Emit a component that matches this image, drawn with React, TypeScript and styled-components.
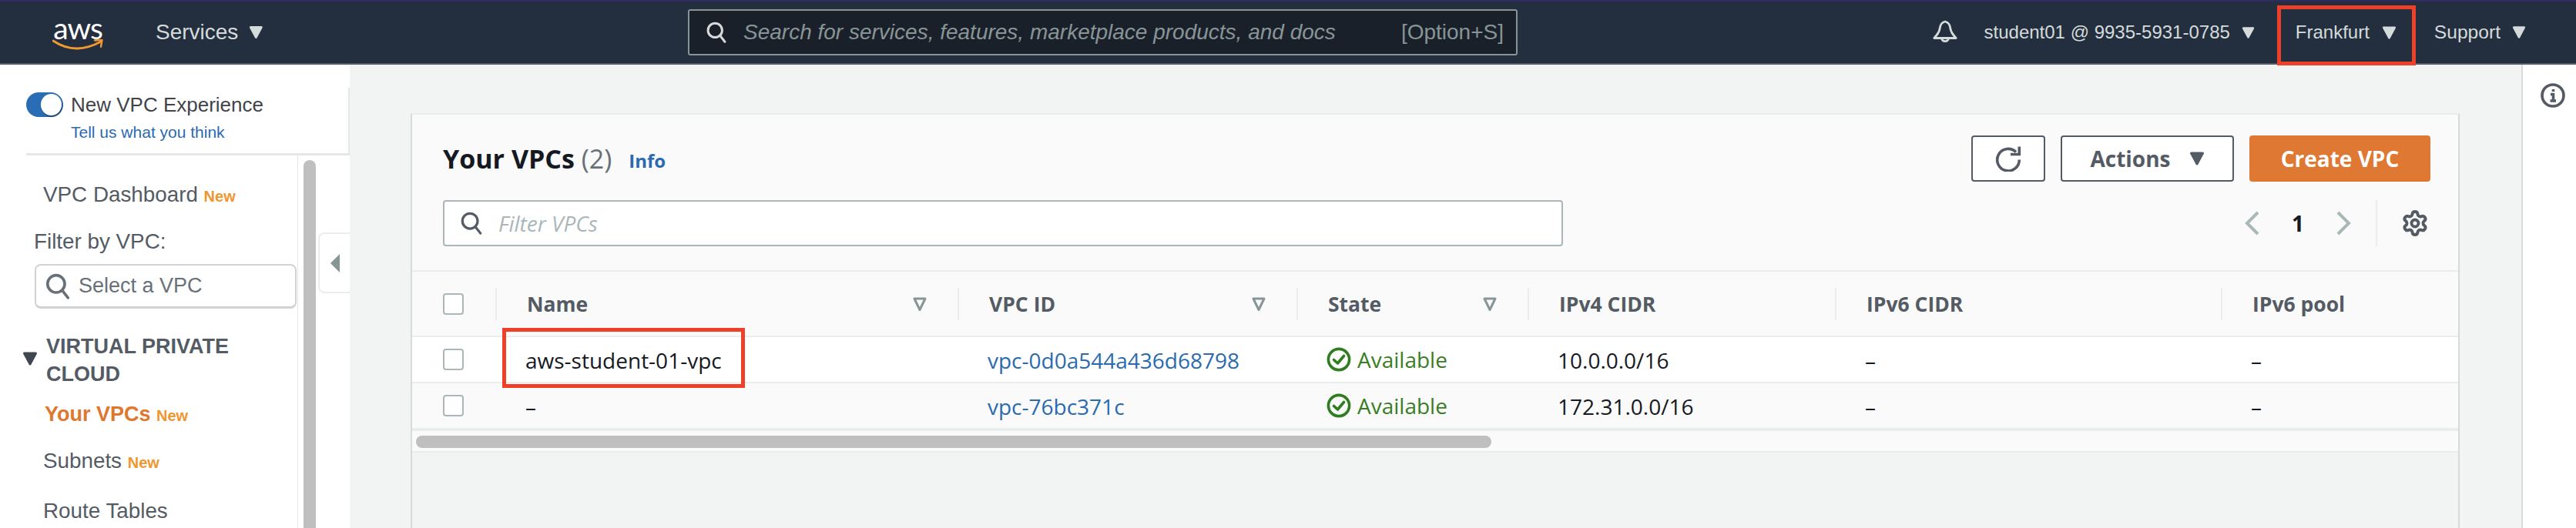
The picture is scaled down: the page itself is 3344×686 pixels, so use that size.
import { FC } from "react";
import styled, { createGlobalStyle } from "styled-components";
import { Settings } from "lucide-react";

type VpcRow = { name: string; id: string; cidr: string; highlighted?: boolean };

const rows: VpcRow[] = [
  { name: "aws-student-01-vpc", id: "vpc-0d0a544a436d68798", cidr: "10.0.0.0/16", highlighted: true },
  { name: "–", id: "vpc-76bc371c", cidr: "172.31.0.0/16" },
];

const SearchIcon: FC<{ size: number }> = ({ size }) => (
  <svg width={size} height={size} viewBox="0 0 32 32" fill="none" stroke="currentColor" strokeWidth="3.4">
    <circle cx="14" cy="13" r="10.5" />
    <path d="M21.5 21l7 9" strokeLinecap="round" />
  </svg>
);

const Caret: FC<{ size: number }> = ({ size }) => (
  <svg width={size} height={size} viewBox="0 0 20 20" fill="currentColor" stroke="currentColor" strokeWidth="3" strokeLinejoin="round">
    <path d="M2.5 3h15L10 17z" />
  </svg>
);

const FilterIcon = () => (
  <svg width="18" height="18" viewBox="0 0 18 18" fill="none" stroke="#879596" strokeWidth="3" strokeLinejoin="round">
    <path d="M2 2h14L9 16.5z" />
  </svg>
);

const CheckIcon = () => (
  <svg width="32" height="32" viewBox="0 0 32 32" fill="none" stroke="#2f7d1e" strokeWidth="3.6" strokeLinecap="round" strokeLinejoin="round">
    <circle cx="16" cy="16" r="13.6" />
    <path d="M9.5 16.5l5 4.5 8-9.5" />
  </svg>
);

const App: FC = () => (
  <Page>
    <GlobalStyle />
    <TopBar>
      <Logo>
        <LogoWord>aws</LogoWord>
        <svg width="66" height="16" viewBox="0 0 66 16" fill="none">
          <path d="M1 2c9 6 20 10 31 10 10 0 20-3 31-9" stroke="#f0992e" strokeWidth="3" strokeLinecap="round" />
          <path d="M55 1.5l9.5-.8-1.5 9" stroke="#f0992e" strokeWidth="2.4" strokeLinecap="round" strokeLinejoin="round" />
        </svg>
      </Logo>
      <ServicesMenu>
        Services
        <Caret size={20} />
      </ServicesMenu>
      <GlobalSearch>
        <SearchIcon size={28} />
        <GlobalSearchText>Search for services, features, marketplace products, and docs</GlobalSearchText>
        <Shortcut>[Option+S]</Shortcut>
      </GlobalSearch>
      <BarRight>
        <svg width="32" height="32" viewBox="0 0 32 32" fill="none" stroke="#d5dbdb" strokeWidth="2.8" strokeLinejoin="round">
          <path d="M16 2c-5 1-6.500 5-7 9.500C8.500 16 5 20 1.800 23.500h28.400C27 20 23.500 16 23 11.500 22.500 7 21 3 16 2z" />
          <path d="M11.500 24a4.600 4.600 0 0 0 9 0" />
        </svg>
        <AccountItem>
          student01 @ 9935-5931-0785
          <Caret size={17} />
        </AccountItem>
        <RegionItem>
          Frankfurt
          <Caret size={19} />
          <RegionMark />
        </RegionItem>
        <SupportItem>
          Support
          <Caret size={18} />
        </SupportItem>
      </BarRight>
    </TopBar>

    <Body>
      <Sidebar>
        <ToggleBlock>
          <ToggleRow>
            <Toggle>
              <Knob />
            </Toggle>
            <ToggleLabel>New VPC Experience</ToggleLabel>
          </ToggleRow>
          <FeedbackLink>Tell us what you think</FeedbackLink>
        </ToggleBlock>
        <NavArea>
          <NavList>
            <NavItem $top={33} $left={56}>
              VPC Dashboard <NewTag>New</NewTag>
            </NavItem>
            <NavItem $top={23} $left={44}>
              Filter by VPC:
            </NavItem>
            <VpcSelect>
              <SearchIcon size={34} />
              Select a VPC
            </VpcSelect>
            <NavGroup>
              <GroupCaret>
                <Caret size={20} />
              </GroupCaret>
              VIRTUAL PRIVATE
              <br />
              CLOUD
            </NavGroup>
            <ActiveItem>
              Your VPCs <NewTag>New</NewTag>
            </ActiveItem>
            <NavItem $top={23} $left={56}>
              Subnets <NewTag>New</NewTag>
            </NavItem>
            <NavItem $top={27} $left={56}>
              Route Tables
            </NavItem>
          </NavList>
          <NavTrack />
          <CollapseHandle>
            <svg width="14" height="26" viewBox="0 0 14 26" fill="#879596">
              <path d="M13 1v24L1 13z" />
            </svg>
          </CollapseHandle>
        </NavArea>
      </Sidebar>

      <Content>
        <Panel>
          <PanelHead>
            <TitleRow>
              <Title>
                Your VPCs <Count>(2)</Count>
              </Title>
              <InfoLink>Info</InfoLink>
              <Actions>
                <RefreshButton>
                  <svg width="34" height="34" viewBox="0 0 34 34" fill="none" stroke="#545b64" strokeWidth="3.6">
                    <path d="M27 8.500A14.300 14.300 0 1 0 31.300 18.500" />
                    <path d="M31.300 1.500V11.500H20" />
                  </svg>
                </RefreshButton>
                <ActionsButton>
                  Actions
                  <Caret size={20} />
                </ActionsButton>
                <CreateButton>Create VPC</CreateButton>
              </Actions>
            </TitleRow>
            <FilterRow>
              <FilterBox>
                <SearchIcon size={30} />
                <FilterText>Filter VPCs</FilterText>
              </FilterBox>
              <Pager>
                <svg width="20" height="32" viewBox="0 0 20 32" fill="none" stroke="#aab7b8" strokeWidth="4">
                  <path d="M17 2L3 16l14 14" />
                </svg>
                <PageNumber>1</PageNumber>
                <svg width="20" height="32" viewBox="0 0 20 32" fill="none" stroke="#aab7b8" strokeWidth="4">
                  <path d="M3 2l14 14L3 30" />
                </svg>
                <PagerDivider />
                <Settings size={36} strokeWidth={2.6} color="#545b64" />
              </Pager>
            </FilterRow>
          </PanelHead>

          <HeadRow>
            <CheckCell>
              <Checkbox />
            </CheckCell>
            <HeadCell>
              <HeadDivider />
              Name
              <FilterSlot>
                <FilterIcon />
              </FilterSlot>
            </HeadCell>
            <HeadCell>
              <HeadDivider />
              VPC ID
              <FilterSlot>
                <FilterIcon />
              </FilterSlot>
            </HeadCell>
            <HeadCell>
              <HeadDivider />
              State
              <FilterSlot>
                <FilterIcon />
              </FilterSlot>
            </HeadCell>
            <HeadCell>
              <HeadDivider />
              IPv4 CIDR
            </HeadCell>
            <HeadCell>
              <HeadDivider />
              IPv6 CIDR
            </HeadCell>
            <HeadCell>
              <HeadDivider />
              IPv6 pool
            </HeadCell>
          </HeadRow>

          {rows.map((row) => (
            <DataRow key={row.id} $highlighted={row.highlighted}>
              <CheckCell>
                <Checkbox />
              </CheckCell>
              <DataCell>
                {row.name}
                {row.highlighted && <NameMark />}
              </DataCell>
              <LinkCell>{row.id}</LinkCell>
              <StateCell>
                <CheckIcon />
                Available
              </StateCell>
              <DataCell>{row.cidr}</DataCell>
              <DataCell>–</DataCell>
              <DataCell>–</DataCell>
            </DataRow>
          ))}

          <ScrollStrip>
            <ScrollThumb />
          </ScrollStrip>
        </Panel>
      </Content>

      <InfoRail>
        <svg width="32" height="32" viewBox="0 0 32 32" fill="none" stroke="#545b64" strokeWidth="3.600">
          <circle cx="16" cy="16" r="14" />
          <path d="M13 14.500h3.500V23M12.500 23h7.500M16.500 8v3" />
        </svg>
      </InfoRail>
    </Body>
  </Page>
);

export default App;

const GlobalStyle = createGlobalStyle`
  html, body {
    margin: 0;
    padding: 0;
    background: #f2f3f3;
  }
`;

const Page = styled.div`
  display: flex;
  flex-direction: column;
  width: 3344px;
  height: 686px;
  overflow: hidden;
  font-family: "Liberation Sans", Arial, sans-serif;
`;

const TopBar = styled.header`
  display: flex;
  align-items: center;
  flex: none;
  box-sizing: border-box;
  height: 84px;
  padding: 0 65px 0 68px;
  background: #232f3e;
  border-top: 2px solid #2f2a60;
  border-bottom: 2px solid #545b64;
  color: #d5dbdb;
`;

const Logo = styled.div`
  display: flex;
  flex-direction: column;
  flex: none;
  width: 66px;
  svg {
    display: block;
    margin-top: -4px;
  }
`;

const LogoWord = styled.span`
  font-family: Lato, "Liberation Sans", sans-serif;
  font-size: 39px;
  line-height: 38px;
  letter-spacing: -1px;
  text-align: center;
  color: #ffffff;
`;

const ServicesMenu = styled.div`
  display: flex;
  align-items: center;
  flex: none;
  gap: 14px;
  margin-left: 68px;
  width: 140px;
  font-size: 28px;
`;

const GlobalSearch = styled.div`
  display: flex;
  align-items: center;
  flex: none;
  box-sizing: border-box;
  width: 1077px;
  height: 60px;
  margin-left: 551px;
  padding: 0 16px 0 21px;
  background: #1a2029;
  border: 2px solid #879596;
  border-radius: 3px;
  color: #d5dbdb;
`;

const GlobalSearchText = styled.span`
  margin-left: 21px;
  font-size: 28px;
  font-style: italic;
  color: #879596;
`;

const Shortcut = styled.span`
  margin-left: auto;
  font-size: 28px;
  color: #879596;
`;

const BarRight = styled.div`
  display: flex;
  align-items: center;
  margin-left: auto;
  font-size: 24px;
`;

const AccountItem = styled.div`
  display: flex;
  align-items: center;
  gap: 15px;
  margin-left: 35px;
`;

const RegionItem = styled.div`
  position: relative;
  display: flex;
  align-items: center;
  gap: 16px;
  margin-left: 53px;
`;

const SupportItem = styled.div`
  display: flex;
  align-items: center;
  gap: 15px;
  margin-left: 49px;
  font-size: 24.600px;
`;

const RegionMark = styled.span`
  position: absolute;
  left: -24px;
  right: -25px;
  top: -21px;
  height: 78px;
  box-sizing: border-box;
  border: 5px solid #ee4028;
`;

const Body = styled.div`
  display: flex;
  flex: 1;
  min-height: 0;
`;

const Sidebar = styled.aside`
  display: flex;
  flex-direction: column;
  flex: none;
  width: 454px;
  padding-top: 30px;
  box-sizing: border-box;
  background: #ffffff;
`;

const ToggleBlock = styled.div`
  flex: none;
  box-sizing: border-box;
  height: 88px;
  margin-left: 34px;
  padding-top: 6px;
  border-right: 2px solid #e4e7e7;
  border-bottom: 3px solid #e4e7e7;
`;

const ToggleRow = styled.div`
  display: flex;
  align-items: center;
  gap: 10px;
`;

const Toggle = styled.span`
  display: flex;
  justify-content: flex-end;
  align-items: center;
  box-sizing: border-box;
  width: 48px;
  height: 32px;
  padding-right: 2px;
  border-radius: 16px;
  background: #2b6db4;
`;

const Knob = styled.span`
  width: 27px;
  height: 28px;
  border-radius: 50%;
  background: #ffffff;
  box-shadow: 1px 2px 1px rgba(20, 40, 70, 0.55);
`;

const ToggleLabel = styled.span`
  font-size: 26px;
  line-height: 32px;
  color: #3f444b;
`;

const FeedbackLink = styled.div`
  margin: 6px 0 0 58px;
  font-size: 21px;
  line-height: 28px;
  color: #2a6ab0;
`;

const NavArea = styled.div`
  position: relative;
  display: flex;
  flex: 1;
  min-height: 0;
`;

const NavList = styled.nav`
  flex: none;
  box-sizing: border-box;
  width: 387px;
  border-right: 1px solid #e4e7e7;
  overflow: hidden;
`;

const NavItem = styled.div<{ $top: number; $left: number }>`
  margin: ${({ $top }) => $top}px 0 0 ${({ $left }) => $left}px;
  font-size: 27.800px;
  line-height: 36px;
  color: #545b64;
  white-space: nowrap;
`;

const NewTag = styled.span`
  font-size: 20px;
  font-weight: 700;
  color: #f0962f;
`;

const VpcSelect = styled.div`
  display: flex;
  align-items: center;
  gap: 10px;
  box-sizing: border-box;
  width: 340px;
  height: 58px;
  margin: 11px 0 0 45px;
  padding-left: 11px;
  border: 2px solid #d0d3d3;
  border-bottom-width: 3px;
  border-radius: 8px;
  font-size: 27px;
  color: #687078;
`;

const NavGroup = styled.div`
  position: relative;
  margin: 31px 0 0 60px;
  font-size: 27px;
  font-weight: 700;
  line-height: 36px;
  color: #545b64;
`;

const GroupCaret = styled.span`
  position: absolute;
  left: -31px;
  top: 24px;
  line-height: 0;
  color: #414750;
`;

const ActiveItem = styled.div`
  margin: 16px 0 0 58px;
  font-size: 27px;
  font-weight: 700;
  line-height: 36px;
  color: #e0772f;
`;

const NavTrack = styled.div`
  flex: none;
  width: 16px;
  margin: 6px 0 0 7px;
  border-radius: 8px 8px 0 0;
  background: #bfbfbf;
`;

const CollapseHandle = styled.div`
  position: absolute;
  left: 413px;
  top: 100px;
  display: flex;
  align-items: center;
  justify-content: center;
  box-sizing: border-box;
  width: 41px;
  height: 79px;
  border: 2px solid #eaeded;
  border-right: none;
  border-radius: 8px 0 0 8px;
  background: #ffffff;
`;

const Content = styled.main`
  flex: 1;
  min-width: 0;
  padding: 63px 80px 0 79px;
  background: #f2f3f3;
`;

const Panel = styled.section`
  box-sizing: border-box;
  height: 100%;
  font-family: "Open Sans", "Liberation Sans", sans-serif;
  border-top: 2px solid #eaeded;
  border-left: 2px solid #d5dbdb;
  border-right: 2px solid #d5dbdb;
`;

const PanelHead = styled.div`
  box-sizing: border-box;
  height: 202px;
  padding: 27px 36px 0 40px;
  background: #fafafa;
`;

const TitleRow = styled.div`
  display: flex;
  align-items: center;
  height: 60px;
`;

const Title = styled.h1`
  margin: 0;
  font-size: 34px;
  font-weight: 700;
  color: #16191f;
`;

const Count = styled.span`
  font-weight: 400;
  color: #687078;
`;

const InfoLink = styled.span`
  margin: 5px 0 0 22px;
  font-size: 24px;
  font-weight: 700;
  color: #2a6ab0;
`;

const Actions = styled.div`
  display: flex;
  gap: 20px;
  margin-left: auto;
`;

const OutlineButton = styled.div`
  display: flex;
  align-items: center;
  justify-content: center;
  box-sizing: border-box;
  height: 60px;
  background: #ffffff;
  border: 2px solid #545b64;
  border-radius: 4px;
  color: #545b64;
`;

const RefreshButton = styled(OutlineButton)`
  width: 96px;
`;

const ActionsButton = styled(OutlineButton)`
  gap: 24px;
  width: 225px;
  font-size: 28px;
  font-weight: 700;
`;

const CreateButton = styled.div`
  display: flex;
  align-items: center;
  justify-content: center;
  width: 235px;
  height: 60px;
  background: #df7832;
  border-radius: 4px;
  font-size: 28px;
  font-weight: 700;
  color: #ffffff;
`;

const FilterRow = styled.div`
  display: flex;
  align-items: center;
  margin-top: 24px;
`;

const FilterBox = styled.div`
  display: flex;
  align-items: center;
  gap: 20px;
  box-sizing: border-box;
  width: 1454px;
  height: 60px;
  padding-left: 20px;
  background: #ffffff;
  border: 2px solid #aab7b8;
  border-radius: 4px;
  color: #545b64;
`;

const FilterText = styled.span`
  font-size: 28px;
  font-style: italic;
  color: #aab7b8;
`;

const Pager = styled.div`
  display: flex;
  align-items: center;
  margin-left: auto;
  padding-right: 2px;
`;

const PageNumber = styled.span`
  width: 98px;
  text-align: center;
  font-size: 28px;
  font-weight: 700;
  color: #16191f;
`;

const PagerDivider = styled.span`
  width: 2px;
  height: 60px;
  margin: 0 31px 0 32px;
  background: #eaeded;
`;

const gridColumns = "108px 600px 440px 300px 399px 501px 308px";

const HeadRow = styled.div`
  display: grid;
  grid-template-columns: ${gridColumns};
  box-sizing: border-box;
  height: 87px;
  background: #fafafa;
  border-top: 2px solid #eaeded;
  border-bottom: 2px solid #eaeded;
`;

const DataRow = styled.div<{ $highlighted?: boolean }>`
  display: grid;
  grid-template-columns: ${gridColumns};
  box-sizing: border-box;
  height: ${({ $highlighted }) => ($highlighted ? 60 : 62)}px;
  background: ${({ $highlighted }) => ($highlighted ? "#ffffff" : "#fafafa")};
  border-bottom: ${({ $highlighted }) => ($highlighted ? 2 : 4)}px solid #eaeded;
`;

const CheckCell = styled.div`
  display: flex;
  align-items: center;
  padding-left: 40px;
`;

const Checkbox = styled.span`
  box-sizing: border-box;
  width: 27px;
  height: 28px;
  background: #ffffff;
  border: 2px solid #aab7b8;
  border-radius: 4px;
`;

const HeadCell = styled.div`
  display: flex;
  align-items: center;
  font-size: 26.500px;
  font-weight: 700;
  color: #545b64;
`;

const HeadDivider = styled.span`
  width: 2px;
  height: 42px;
  margin-right: 39px;
  background: #eaeded;
`;

const FilterSlot = styled.span`
  display: flex;
  margin-left: auto;
  margin-right: 40px;
`;

const DataCell = styled.div`
  position: relative;
  display: flex;
  align-items: center;
  padding: 2px 0 0 39px;
  font-size: 28px;
  color: #16191f;
`;

const LinkCell = styled(DataCell)`
  color: #2a6ab0;
`;

const StateCell = styled(DataCell)`
  gap: 8px;
  padding-top: 0;
  color: #3a7d25;
`;

const NameMark = styled.span`
  position: absolute;
  left: 9px;
  top: -12px;
  width: 315px;
  height: 78px;
  box-sizing: border-box;
  border: 5px solid #ee4028;
`;

const ScrollStrip = styled.div`
  box-sizing: border-box;
  height: 28px;
  padding: 6px 0 0 5px;
  background: #fafafa;
  border-bottom: 2px solid #eaeded;
`;

const ScrollThumb = styled.div`
  width: 1396px;
  height: 16px;
  border-radius: 8px;
  background: #bfbfbf;
`;

const InfoRail = styled.aside`
  flex: none;
  box-sizing: border-box;
  width: 71px;
  padding: 24px 0 0 23px;
  background: #ffffff;
  border-left: 2px solid #d5dbdb;
`;
